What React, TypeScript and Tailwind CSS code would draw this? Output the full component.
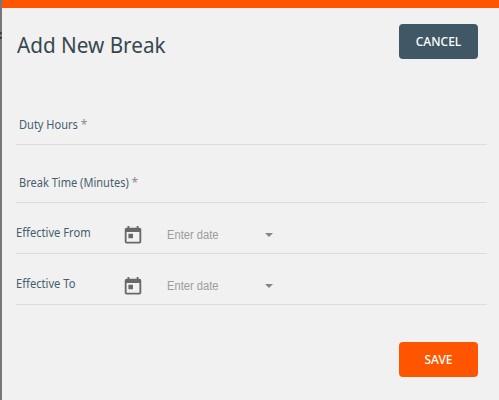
import type { ReactNode } from "react";

function TodayIcon() {
  return (
    <svg viewBox="0 0 24 24" preserveAspectRatio="none" className="h-[21px] w-[22px] shrink-0 fill-[#686868]">
      <path d="M19 3h-1V1h-2v2H8V1H6v2H5c-1.11 0-1.99.9-1.99 2L3 19c0 1.1.89 2 2 2h14c1.1 0 2-.9 2-2V5c0-1.1-.9-2-2-2zm0 16H5V8h14v11zM7 10h5v5H7z" />
    </svg>
  );
}

function TextField({ label }: { label: string }) {
  return (
    <label className="flex h-[58px] items-end border-b border-[#dcdcdc] pb-[10px] pl-[3px] text-[12px] leading-[18px] text-[#455f6e]">
      <span className="origin-left scale-x-[0.92] whitespace-nowrap">
        {label} <span className="text-[13px] text-[#8c8c8c]">*</span>
      </span>
    </label>
  );
}

function DateField({ label }: { label: string }) {
  return (
    <div className="flex h-[51px] border-b border-[#dcdcdc]">
      <span className="w-[106px] origin-left scale-x-[0.93] pt-[21px] text-[12px] leading-[18px] text-[#455f6e]">{label}</span>
      <div className="pt-[22px]">
        <TodayIcon />
      </div>
      <div className="ml-[23px] mt-[23px] flex h-[18px] w-[105.5px] items-center justify-between font-['Liberation_Sans',sans-serif] text-[12px] leading-[18px] text-[#9c9c9c]">
        <span className="origin-left scale-x-[0.93]">Enter date</span>
        <svg viewBox="0 0 8 4" className="h-[4px] w-[8px] fill-[#858585]">
          <path d="M0 0h8L4 4z" />
        </svg>
      </div>
    </div>
  );
}

function Button({ color, children }: { color: string; children: ReactNode }) {
  return (
    <button className={`h-[35px] w-[79px] shrink-0 rounded-[4px] text-[12px] font-medium leading-[18px] text-white ${color}`}>
      {children}
    </button>
  );
}

export default function App() {
  return (
    <div className="relative h-[400px] w-[499px] overflow-hidden bg-[#777777] pl-[2px] font-['Noto_Sans',sans-serif]">
      <div className="absolute left-0 top-[32px] h-[7px] w-[2px] rounded-r-[2px] border-y-2 border-[#29343a]" />
      <main className="h-full rounded-tl-[3px] border-t-[8px] border-[#ff5500] bg-[#f1f1f1] pl-[14px] pr-[12px]">
        <header className="flex h-[79px] items-start justify-between pr-[9px] pt-[16px]">
          <h1 className="ml-[0.5px] origin-left scale-x-[0.985] pt-[6px] text-[21px] leading-[30px] text-[#37474f]">Add New Break</h1>
          <Button color="bg-[#405766]">CANCEL</Button>
        </header>
        <TextField label="Duty Hours" />
        <TextField label="Break Time (Minutes)" />
        <DateField label="Effective From" />
        <DateField label="Effective To" />
        <footer className="flex justify-end pr-[9px] pt-[37px]">
          <Button color="bg-[#ff5500]">SAVE</Button>
        </footer>
      </main>
    </div>
  );
}
